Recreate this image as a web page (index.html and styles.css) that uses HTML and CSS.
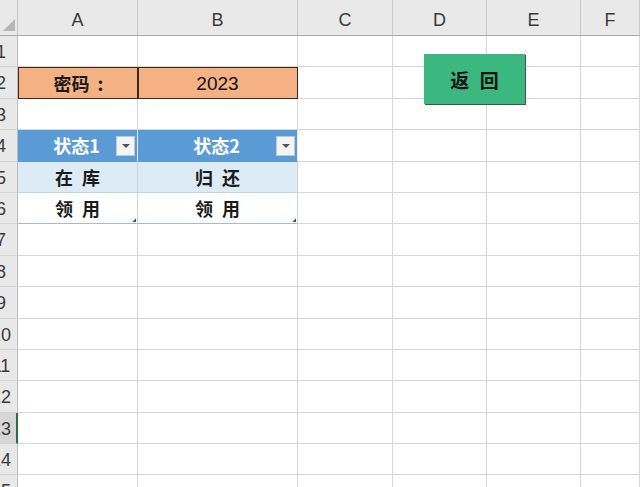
FILE: index.html
```html
<!DOCTYPE html>
<html lang="zh-CN">
<head>
<meta charset="utf-8">
<title>Sheet</title>
<link rel="stylesheet" href="styles.css">
</head>
<body>
<div class="sheet">
  <div class="row head">
    <div class="corner"></div>
    <div class="ch">A</div><div class="ch">B</div><div class="ch">C</div><div class="ch">D</div><div class="ch">E</div><div class="ch">F</div>
  </div>
  <div class="row"><div class="rh"><span>1</span></div><div class="c"></div><div class="c"></div><div class="c"></div><div class="c"></div><div class="c"></div><div class="c"></div></div>
  <div class="row"><div class="rh"><span>2</span></div><div class="c org lbl">密码 :</div><div class="c org num">2023</div><div class="c"></div><div class="c"></div><div class="c"></div><div class="c"></div></div>
  <div class="row"><div class="rh"><span>3</span></div><div class="c"></div><div class="c"></div><div class="c"></div><div class="c"></div><div class="c"></div><div class="c"></div></div>
  <div class="row"><div class="rh"><span>4</span></div><div class="c th">状态1<span class="dd"></span></div><div class="c th">状态2<span class="dd"></span></div><div class="c"></div><div class="c"></div><div class="c"></div><div class="c"></div></div>
  <div class="row"><div class="rh"><span>5</span></div><div class="c td band">在 库</div><div class="c td band">归 还</div><div class="c"></div><div class="c"></div><div class="c"></div><div class="c"></div></div>
  <div class="row"><div class="rh"><span>6</span></div><div class="c td last">领 用<span class="grip"></span></div><div class="c td last">领 用<span class="grip"></span></div><div class="c"></div><div class="c"></div><div class="c"></div><div class="c"></div></div>
  <div class="row"><div class="rh"><span>7</span></div><div class="c"></div><div class="c"></div><div class="c"></div><div class="c"></div><div class="c"></div><div class="c"></div></div>
  <div class="row"><div class="rh"><span>8</span></div><div class="c"></div><div class="c"></div><div class="c"></div><div class="c"></div><div class="c"></div><div class="c"></div></div>
  <div class="row"><div class="rh"><span>9</span></div><div class="c"></div><div class="c"></div><div class="c"></div><div class="c"></div><div class="c"></div><div class="c"></div></div>
  <div class="row"><div class="rh"><span>10</span></div><div class="c"></div><div class="c"></div><div class="c"></div><div class="c"></div><div class="c"></div><div class="c"></div></div>
  <div class="row"><div class="rh"><span>11</span></div><div class="c"></div><div class="c"></div><div class="c"></div><div class="c"></div><div class="c"></div><div class="c"></div></div>
  <div class="row"><div class="rh"><span>12</span></div><div class="c"></div><div class="c"></div><div class="c"></div><div class="c"></div><div class="c"></div><div class="c"></div></div>
  <div class="row"><div class="rh sel"><span>13</span></div><div class="c"></div><div class="c"></div><div class="c"></div><div class="c"></div><div class="c"></div><div class="c"></div></div>
  <div class="row"><div class="rh"><span>14</span></div><div class="c"></div><div class="c"></div><div class="c"></div><div class="c"></div><div class="c"></div><div class="c"></div></div>
  <div class="row"><div class="rh"><span>15</span></div><div class="c"></div><div class="c"></div><div class="c"></div><div class="c"></div><div class="c"></div><div class="c"></div></div>
  <button class="back">返 回</button>
</div>
</body>
</html>
```

FILE: styles.css
```css
html, body {
  margin: 0;
  padding: 0;
  background: #ffffff;
  overflow: hidden;
}
.sheet {
  position: relative;
  width: 640px;
  height: 487px;
  overflow: hidden;
  font-family: "Liberation Sans", "Noto Sans CJK SC", sans-serif;
  color: #222;
}
.row {
  display: grid;
  grid-template-columns: 18px 120px 160px 95px 94px 94px 59px;
  height: 31.4px;
}
.row.head {
  height: 36px;
  background: #e9e9e9;
  border-bottom: 1px solid #a9a9a9;
  box-sizing: border-box;
}
.corner {
  position: relative;
  border-right: 1px solid #c4c4c4;
}
.corner::after {
  content: "";
  position: absolute;
  left: 3px;
  top: 19px;
  width: 12px;
  height: 12px;
  background: #b6b6b6;
  clip-path: polygon(100% 0, 100% 100%, 0 100%);
}
.ch {
  display: flex;
  align-items: center;
  justify-content: center;
  padding-top: 5px;
  font-size: 18px;
  color: #3a3a3a;
  border-right: 1px solid #c8c8c8;
}
.rh {
  overflow: hidden;
  background: #e8e8e8;
  border-right: 1px solid #bdbdbd;
  border-bottom: 1px solid #d4d4d4;
  box-sizing: border-box;
}
.rh span {
  display: block;
  width: 36px;
  margin-left: -17px;
  text-align: center;
  font-size: 18px;
  line-height: 33px;
  color: #3a3a3a;
}
.rh.sel {
  background: #d6d6d6;
  border-right: 2px solid #217346;
}
.c {
  position: relative;
  border-right: 1px solid #d6d6d6;
  border-bottom: 1px solid #d6d6d6;
  box-sizing: border-box;
  display: flex;
  align-items: center;
  justify-content: center;
  font-size: 18px;
}
.org {
  background: #f4b183;
  box-shadow: inset 1px 1px 0 #3b2a1c;
  border-right-color: #3b2a1c;
  border-bottom-color: #3b2a1c;
}
.lbl {
  font-family: "Noto Sans CJK SC", sans-serif;
  font-weight: 700;
  word-spacing: 4px;
  padding-left: 2px;
  color: #1a1a1a;
}
.num {
  font-size: 19px;
  padding-top: 2px;
  color: #111;
}
.th {
  background: #5b9bd5;
  color: #fff;
  font-family: "Noto Sans CJK SC", sans-serif;
  font-weight: 700;
  border-right-color: #e6eef8;
  border-bottom-color: #5b9bd5;
  padding-right: 2px;
}
.dd {
  position: absolute;
  right: 2px;
  top: 6px;
  width: 19px;
  height: 20px;
  background: #f4f4f4;
  border: 1px solid #b9c8da;
  box-sizing: border-box;
}
.dd::after {
  content: "";
  position: absolute;
  left: 5px;
  top: 7px;
  border-left: 4px solid transparent;
  border-right: 4px solid transparent;
  border-top: 4px solid #555;
}
.td {
  font-family: "Noto Sans CJK SC", sans-serif;
  font-weight: 700;
  word-spacing: 5px;
  color: #1c1c1c;
  border-right-color: #c9d3de;
  border-bottom-color: #bcd3ec;
}
.band {
  background: #ddebf7;
}
.last {
  border-bottom-color: #9dbde0;
}
.grip {
  position: absolute;
  right: 1px;
  bottom: 1px;
  width: 4px;
  height: 4px;
  background: #2f5597;
  clip-path: polygon(100% 0, 100% 100%, 0 100%);
}
.back {
  position: absolute;
  left: 424px;
  top: 54px;
  width: 101px;
  height: 50px;
  margin: 0;
  padding: 0;
  border: none;
  background: #3bb87f;
  box-shadow: 1px 1px 0 #4d4d4d;
  font-family: "Noto Sans CJK SC", sans-serif;
  font-weight: 700;
  font-size: 19px;
  word-spacing: 6px;
  color: #151515;
}
```
